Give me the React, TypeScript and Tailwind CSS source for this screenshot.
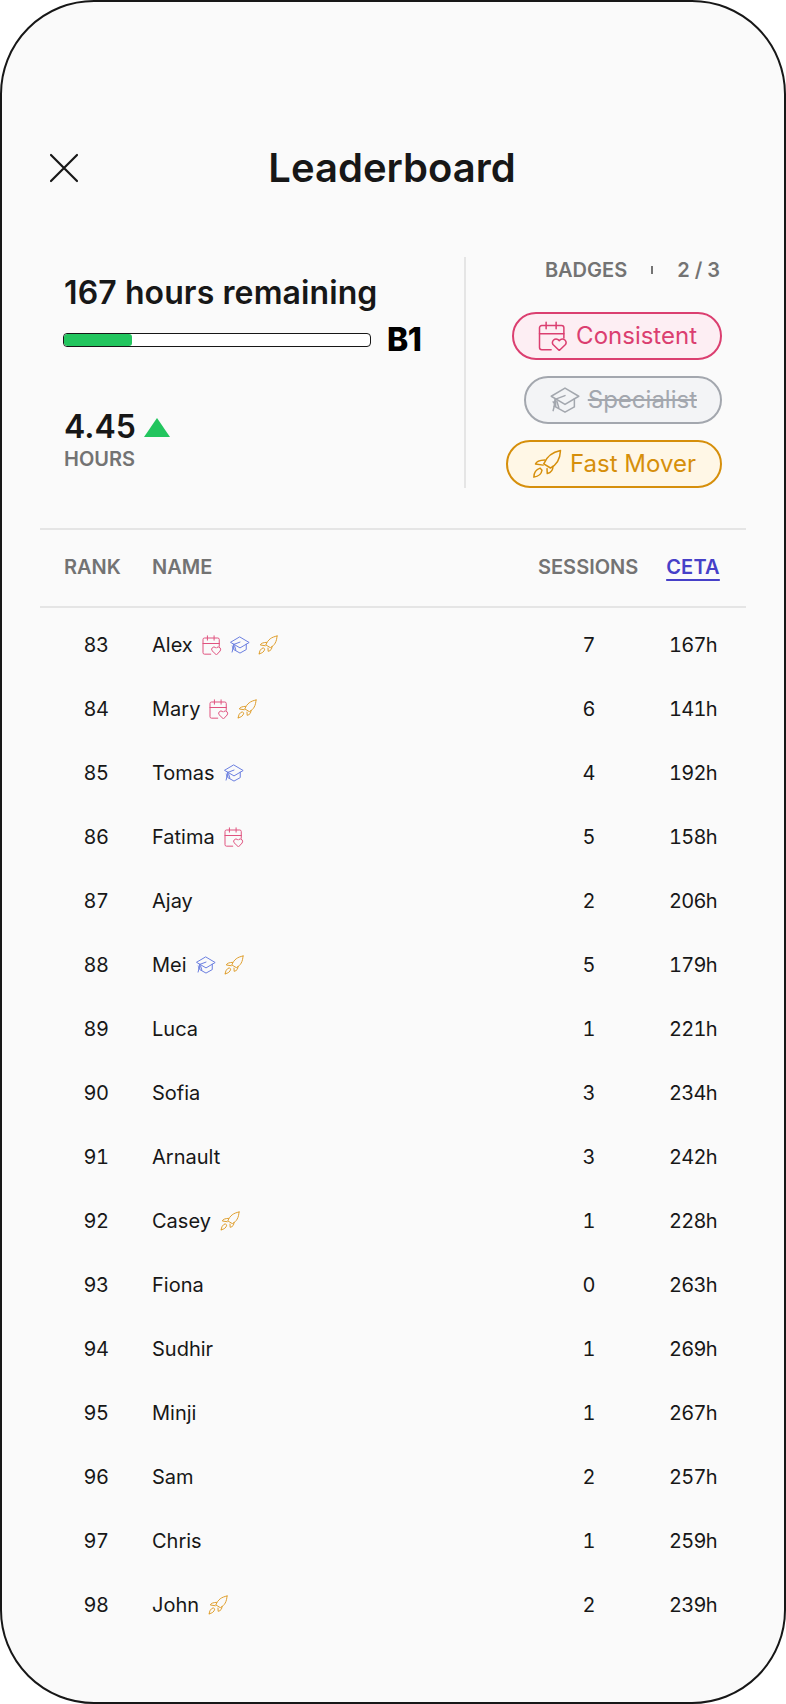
import React from "react";

function CalIcon({ className }: { className: string }) {
  return (
    <svg viewBox="0 0 24 24" fill="none" stroke="currentColor" strokeWidth="1.2" strokeLinecap="round" strokeLinejoin="round" className={className}>
      <path d="M10.500 23H3a1.800 1.800 0 0 1-1.800-1.800V5.400A1.800 1.800 0 0 1 3 3.600h15.900a1.800 1.800 0 0 1 1.800 1.800v8.100" />
      <path d="M1.200 10.200h19.500" />
      <path d="M6.500 1v5.200M14.500 1v5.200" />
      <path d="M17 23.600l-5-4.800a2.900 2.900 0 0 1 4.100-3.900l.9.900.9-.9a2.900 2.900 0 0 1 4.100 3.900z" />
    </svg>
  );
}
function CapIcon({ className }: { className: string }) {
  return (
    <svg viewBox="0 0 24 24" fill="none" stroke="currentColor" strokeWidth="1.2" strokeLinecap="round" strokeLinejoin="round" className={className}>
      <path d="M12 2.500 23 9l-11 6.500L1 9z" />
      <path d="M4.500 11v6.500l7.500 4.200 7.500-4.200V11" />
      <path d="M12 8.500 4 11.500 3.400 17l-.9 3.500" />
      <path d="M2.500 13.500c1.500 1 1.500 3 .9 3.500M5.500 13l1.500 5" />
    </svg>
  );
}
function RocketIcon({ className }: { className: string }) {
  return (
    <svg viewBox="0 0 24 24" fill="none" stroke="currentColor" strokeWidth="1.2" strokeLinecap="round" strokeLinejoin="round" className={className}>
      <path d="M22.800 1.200C16 2.500 12 5.500 9.400 11.900l5.400 3.300C20 12.500 22.500 8 22.800 1.200z" />
      <path d="M10.300 8.800C6 9 3.500 10 2.800 12l6 .9" />
      <path d="M16.800 13.800c0 3-1.300 5-4.600 5.800L12 15.700" />
      <path d="M1.500 22.500C1.500 19.500 3 16.500 6.500 15.300L8 17c-.5 3-3 5-6.500 5.500z" />
    </svg>
  );
}

type B = "c" | "s" | "f";
const rows: [number, string, B[], number, string][] = [
  [83, "Alex", ["c", "s", "f"], 7, "167h"],
  [84, "Mary", ["c", "f"], 6, "141h"],
  [85, "Tomas", ["s"], 4, "192h"],
  [86, "Fatima", ["c"], 5, "158h"],
  [87, "Ajay", [], 2, "206h"],
  [88, "Mei", ["s", "f"], 5, "179h"],
  [89, "Luca", [], 1, "221h"],
  [90, "Sofia", [], 3, "234h"],
  [91, "Arnault", [], 3, "242h"],
  [92, "Casey", ["f"], 1, "228h"],
  [93, "Fiona", [], 0, "263h"],
  [94, "Sudhir", [], 1, "269h"],
  [95, "Minji", [], 1, "267h"],
  [96, "Sam", [], 2, "257h"],
  [97, "Chris", [], 1, "259h"],
  [98, "John", ["f"], 2, "239h"],
];

function MiniBadge({ b }: { b: B }) {
  if (b === "c") return <CalIcon className="w-[20px] h-[20px] text-[#e0527f]" />;
  if (b === "s") return <CapIcon className="w-[20px] h-[20px] text-[#6b7fe0]" />;
  return <RocketIcon className="w-[20px] h-[20px] text-[#e0a030]" />;
}

export default function App() {
  return (
    <div className="w-[786px] h-[1704px] bg-white font-['Inter',sans-serif] text-[#171717]">
      <div className="w-full h-full bg-[#fafafa] border-2 border-[#171717] rounded-[94px] overflow-hidden flex flex-col">
        <div className="relative mt-[138px] h-[56px] flex items-center justify-center pr-[2px]">
          <svg viewBox="0 0 30 30" fill="none" stroke="#171717" strokeWidth="2.2" strokeLinecap="round" className="absolute left-[47px] top-[13px] w-[30px] h-[30px]">
            <path d="M2 2l26 26M28 2 2 28" />
          </svg>
          <h1 className="text-[40px] leading-[56px] font-semibold">Leaderboard</h1>
        </div>
        <div className="mt-[61px] flex h-[231px]">
          <div className="w-[464px] pl-[61px] pr-[40px] border-r-2 border-[#e5e5e5] flex flex-col">
            <div className="mt-[16px] pl-[1px] text-[32px] leading-[40px] font-semibold whitespace-nowrap tracking-[0.1px]">167 hours remaining</div>
            <div className="mt-[9px] flex items-center">
              <div className="w-[308px] h-[14px] rounded-[4px] border border-[#171717] bg-white overflow-hidden">
                <div className="w-[68px] h-full bg-[#22c55e] rounded-[3px]" />
              </div>
              <span className="ml-[16px] text-[32px] leading-[36px] font-extrabold text-black tracking-[-0.5px]">B1</span>
            </div>
            <div className="mt-[47px] pl-[1px] flex items-center">
              <span className="text-[32px] leading-[44px] font-semibold">4.45</span>
              <span className="ml-[8px] mt-[1px] w-0 h-0 border-l-[13px] border-r-[13px] border-b-[19px] border-l-transparent border-r-transparent border-b-[#22c55e]" />
            </div>
            <div className="pl-[1px] -mt-[3px] text-[20px] leading-[26px] font-semibold text-[#737373]">HOURS</div>
          </div>
          <div className="flex-1 pr-[62px] flex flex-col items-end">
            <div className="mt-[1px] pr-[2px] flex items-center text-[20px] leading-[24px] font-semibold text-[#737373]">
              <span>BADGES</span>
              <span className="mx-[24px] w-[2px] h-[8px] bg-[#737373]" />
              <span>2 / 3</span>
            </div>
            <div className="mt-[30px] h-[48px] rounded-full border-2 border-[#db3f70] bg-[#fdeef3] pl-[24px] pr-[23px] flex items-center gap-[8px] text-[#db3f70] text-[24px]">
              <CalIcon className="w-[30px] h-[30px]" />
              <span>Consistent</span>
            </div>
            <div className="mt-[16px] h-[48px] rounded-full border-2 border-[#a3a7ae] bg-[#f3f4f6] pl-[24px] pr-[23px] flex items-center gap-[8px] text-[#a3a7ae] text-[24px]">
              <CapIcon className="w-[30px] h-[30px]" />
              <span className="line-through">Specialist</span>
            </div>
            <div className="mt-[16px] h-[48px] rounded-full border-2 border-[#d68f0b] bg-[#fff7e6] pl-[24px] pr-[24px] flex items-center gap-[8px] text-[#d68f0b] text-[24px]">
              <RocketIcon className="w-[30px] h-[30px]" />
              <span>Fast Mover</span>
            </div>
          </div>
        </div>
        <div className="mx-[38px] mt-[40px] border-y-2 border-[#e5e5e5] h-[80px] pb-[3px] flex items-center text-[20px] font-semibold text-[#737373] pl-[24px] pr-[26px]">
          <div className="w-[88px]">RANK</div>
          <div className="flex-1">NAME</div>
          <div className="w-[100px] text-center">SESSIONS</div>
          <div className="ml-[28px] w-[54px] text-center text-[#4640c8] underline decoration-2 underline-offset-[5px] tracking-[0.2px]">CETA</div>
        </div>
        <div className="mt-[5px] flex flex-col">
          {rows.map(([rank, name, badges, sessions, ceta]) => (
            <div key={rank} className="h-[64px] flex items-center text-[20px] mx-[38px] pl-[24px] pr-[26px]">
              <div className="w-[88px] pr-[24px] text-center tabular-nums tracking-[-0.5px]">{rank}</div>
              <div className="flex-1 flex items-center">
                <span>{name}</span>
                <div className="ml-[9px] flex items-center gap-[8px]">
                  {badges.map((b) => <MiniBadge key={b} b={b} />)}
                </div>
              </div>
              <div className="w-[100px] pl-[2px] text-center tabular-nums">{sessions}</div>
              <div className="ml-[28px] w-[54px] text-center tabular-nums tracking-[-0.7px]">{ceta}</div>
            </div>
          ))}
        </div>
      </div>
    </div>
  );
}
